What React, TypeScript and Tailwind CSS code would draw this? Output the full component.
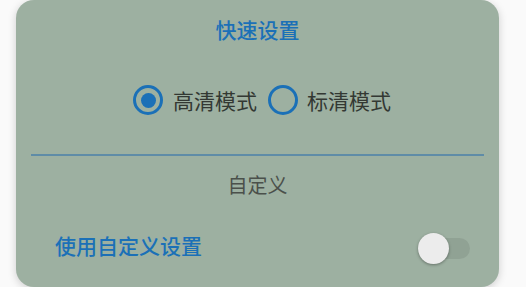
import React from "react";

function Radio({ checked }: { checked: boolean }) {
  return (
    <div className="w-[30px] h-[30px] rounded-full border-[3px] border-[#1b70b7] flex items-center justify-center shrink-0">
      {checked && <div className="w-[15px] h-[15px] rounded-full bg-[#1b70b7]" />}
    </div>
  );
}

export default function App() {
  return (
    <div
      className="w-[526px] h-[287px] bg-[#fafafa] px-[16px] overflow-hidden"
      style={{ fontFamily: '"Noto Sans CJK SC", "Noto Sans", sans-serif' }}
    >
      <div className="w-[483px] h-[287px] rounded-[18px] bg-[#9db0a1] shadow-[0_2px_8px_rgba(0,0,0,0.18)] flex flex-col">
        <div className="h-[58px] flex items-center justify-center text-[21px] font-medium text-[#1b70b7] leading-none">
          快速设置
        </div>
        <div className="mt-[22px] h-[40px] flex items-center justify-center pl-[9px] text-[21px] text-[#333833] leading-none">
          <Radio checked />
          <span className="ml-[10px]">高清模式</span>
          <div className="ml-[11px]">
            <Radio checked={false} />
          </div>
          <span className="ml-[9px]">标清模式</span>
        </div>
        <div className="mt-[34px] mx-[15px] h-[2px] bg-[#5f8ca7]" />
        <div className="mt-[9px] h-[40px] flex items-center justify-center text-[20px] text-[#4b504b] leading-none">
          自定义
        </div>
        <div className="mt-[20px] h-[40px] flex items-center justify-between pl-[39px] pr-[29px]">
          <span className="text-[21px] font-medium text-[#1b70b7] leading-none">使用自定义设置</span>
          <div className="relative w-[51px] h-[21px] rounded-full bg-black/[0.08] mt-[6px]">
            <div className="absolute left-[-1px] top-[-5px] w-[31px] h-[31px] rounded-full bg-[#ececec] shadow-[0_1px_3px_rgba(0,0,0,0.35)]" />
          </div>
        </div>
      </div>
    </div>
  );
}
